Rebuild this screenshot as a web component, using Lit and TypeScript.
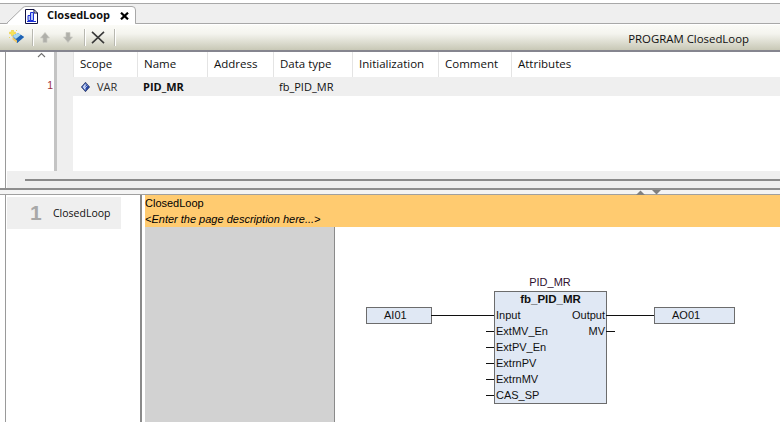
import { LitElement, html, css } from "lit";
import { customElement } from "lit/decorators.js";

const columns = [
  { label: "Scope", w: 64 },
  { label: "Name", w: 70 },
  { label: "Address", w: 66 },
  { label: "Data type", w: 79 },
  { label: "Initialization", w: 86 },
  { label: "Comment", w: 73 },
  { label: "Attributes", w: 269 },
];
const inputs = ["Input", "ExtMV_En", "ExtPV_En", "ExtrnPV", "ExtrnMV", "CAS_SP"];
const outputs = ["Output", "MV"];

const docIcon = html`<svg class="doc" width="13" height="15" viewBox="0 0 13 15">
  <path d="M.5.5H9L12.5 4V14.5H.5Z" fill="#fff" stroke="#101040"/>
  <path d="M9 .5V4H12.5" fill="none" stroke="#101040"/>
  <path d="M5.5 3.5h3v8h-3zM3 6.5h2.5v5H3z" fill="#b8c8f4" stroke="#1c30d8"/>
  <path d="M2 12.5h9" stroke="#1c30d8"/>
</svg>`;
const newIcon = html`<svg width="16" height="15" viewBox="0 0 16 15">
  <path d="M2.5 0h2v2h2v2h-2v2h-2V4H.5V2h2z" fill="#f6e458" stroke="#e8c840" stroke-width=".5"/>
  <path d="M7 0h1v1H7zM0 7h1v1H0z" fill="#e8d860"/>
  <path d="M3.5 6L9 3l6 4-7 6z" fill="#2f78c8"/>
  <path d="M3.5 6L9 3l3 2-5 4z" fill="#a8d8f0"/>
  <path d="M7 9l5-4 3 2-7 6z" fill="#1e62b4"/>
  <path d="M3.5 7l4.5 3.5V13L3.5 9.500z" fill="#f0c868"/>
</svg>`;
const arrow = (down: boolean) => html`<svg class="arrow" width="10" height="11" viewBox="0 0 10 11">
  <path d=${down ? "M3 .5h4v4.500H9.500L5 10.500.5 5H3z" : "M3 10.500h4V6H9.500L5 .5.5 6H3z"} fill="#b0b0aa" stroke="#c8c8c2" stroke-width=".7"/>
</svg>`;
const closeToolIcon = html`<svg width="14" height="13" viewBox="0 0 14 13">
  <path d="M1 .8l12 11.400M13 .8L1 12.200" stroke="#3a3a3a" stroke-width="1.6" fill="none"/>
</svg>`;
const tabClose = html`<svg width="9" height="8" viewBox="0 0 9 8">
  <path d="M1 .7l7 6.600M8 .7L1 7.300" stroke="#000" stroke-width="2.200" fill="none"/>
</svg>`;
const varIcon = html`<svg width="9" height="10" viewBox="0 0 9 10">
  <path d="M4.500 .3L8.700 5 4.500 9.700.3 5z" fill="#2848a8" stroke="#202848" stroke-width=".6"/>
  <path d="M4.500 1.200L1.500 5l3 3.600z" fill="#b8c8f0"/>
  <path d="M2.500 5l3-2.800M3 7l3.500-3.500" stroke="#e8f0ff" stroke-width=".7"/>
</svg>`;

@customElement("app-root")
export class AppRoot extends LitElement {
  static styles = css`
    :host { display: block; width: 780px; height: 422px; overflow: hidden; background: #fff;
      font-family: "Open Sans", sans-serif; font-size: 11px; color: #101010; }
    .frame { height: 422px; display: flex; flex-direction: column; box-sizing: border-box; }

    .tabstrip { height: 21px; margin-top: 3px; box-sizing: border-box; background: #efefef;
      border-top: 1px solid #a8a8a8; border-bottom: 1px solid #a8a8a8; position: relative; flex: none; }
    .tab { position: absolute; left: 6px; top: 1px; width: 130px; height: 19px; }
    .tab > svg.shape { position: absolute; left: 0; top: 0; }
    .tabbody { position: absolute; left: 19px; top: 1px; display: flex; align-items: center; height: 17px; }
    .tabbody .doc { margin-top: 3px; flex: none; }
    .tabname { font-weight: 700; font-size: 11px; margin-left: 9px; width: 73px; flex: none; }
    .tabbody svg:last-child { margin-top: 2px; flex: none; }

    .toolbar { height: 27px; margin-top: 1px; flex: none; box-sizing: border-box; display: flex; align-items: center;
      background: linear-gradient(#fbfbf7, #f4f4ee 35%, #c8c8b6);
      border-bottom: 2px solid #85858f; padding-left: 9px; }
    .sep { width: 1px; height: 17px; background: #b8b8b0; box-shadow: 1px 0 0 #fff; flex: none; }
    .tools-a { width: 23px; display: flex; }
    .tools-b { width: 51px; display: flex; gap: 13px; padding-left: 7px; box-sizing: border-box; }
    .tools-c { width: 29px; display: flex; padding-left: 6px; box-sizing: border-box; }
    .title { margin-left: auto; padding: 1px 31px 0 0; font-size: 11.4px; }

    .decl { height: 136px; flex: none; margin-left: 5px; box-sizing: border-box; border-left: 1px solid #9a9a9a;
      display: flex; flex-direction: column; }
    .decl-main { height: 119px; flex: none; display: flex; }
    .numbers { width: 48px; position: relative; flex: none; border-right: 3px solid #c4c4c4; }
    .sort { position: absolute; left: 31px; top: 0; }
    .line { position: absolute; right: 1px; top: 27px; color: #a03040; font-family: "Liberation Sans", sans-serif; font-size: 10.5px; }
    .numstrip { width: 16px; flex: none; background: #efefef; }
    .table { flex: 1; display: flex; flex-direction: column; }
    .head { height: 25px; display: flex; flex: none; }
    .head div { box-sizing: border-box; border-left: 1px solid #e4e4e4; padding: 4px 0 0 6px; flex: none; font-size: 11.5px; }
    .row { height: 19px; background: #efefef; display: flex; align-items: center; flex: none; }
    .row div { flex: none; box-sizing: border-box; padding-left: 6px; }
    .row .scopecell { display: flex; align-items: center; gap: 7px; color: #303030; padding-left: 8px; }
    .scrollband { height: 17px; margin-left: 1px; background: #efefef; display: flex; align-items: center; padding-left: 18px; flex: none; }
    .scrollband i { flex: 1; height: 2px; background: #8a8a8a; display: block; }

    .splitter { height: 7px; flex: none; box-sizing: border-box; border-top: 2px solid #8e8e8e; border-bottom: 1px solid #a0a0a0;
      background: #f4f4f4; position: relative; }
    .splitter svg { position: absolute; top: 0; left: 636px; }

    .lower { flex: 1; display: flex; margin-left: 5px; border-left: 1px solid #9a9a9a; min-height: 0; }
    .pages { width: 136px; flex: none; box-sizing: border-box; border-right: 2px solid #8a8a8a; padding: 2px 0 0 1px; }
    .pageitem { width: 114px; height: 32px; background: #efefef; display: flex; align-items: center; box-sizing: border-box; padding-left: 23px; }
    .pageitem b { font-size: 21px; color: #a8a8a8; font-family: "Liberation Sans", sans-serif; width: 23px; }
    .pageitem span { font-size: 10.5px; }
    .editor { flex: 1; min-width: 0; margin-left: 3px; display: flex; flex-direction: column; }
    .pagehead { height: 32px; flex: none; background: #ffcb70; font-family: "Liberation Sans", sans-serif; font-size: 11px; color: #000; line-height: 16px; }
    .pagehead em { display: block; font-style: italic; }
    .canvas { flex: 1; position: relative; background: #fff; font-family: "Liberation Sans", sans-serif; font-size: 11px; color: #101010; }
    .margin { position: absolute; left: 0; top: 0; bottom: 0; width: 189px; background: #d2d2d2; border-right: 1px solid #8a8a8a; }
    .label { position: absolute; box-sizing: border-box; background: #e0e8f4; border: 1px solid #6c6c6c; height: 17px; line-height: 15px; padding-left: 17px; }
    .wire { position: absolute; height: 1px; background: #101010; }
    .fbname { position: absolute; left: 349px; width: 112px; top: 48px; text-align: center; line-height: 14px; color: #301030; }
    .block { position: absolute; left: 349px; top: 64px; width: 113px; height: 113px; box-sizing: border-box; background: #e0e8f4; border: 1px solid #6c6c6c; }
    .block h4 { margin: 0; font-size: 11.5px; font-weight: 700; text-align: center; line-height: 15px; }
    .pins { display: flex; justify-content: space-between; padding: 0 1px; }
    .pins > div { display: flex; flex-direction: column; }
    .pins span { height: 16px; line-height: 16px; }
    .pins .out { text-align: right; }
  `;

  render() {
    const W = columns.map((c) => c.w);
    return html`<div class="frame">
      <div class="tabstrip">
        <div class="tab">
          <svg class="shape" width="130" height="19" viewBox="0 0 130 19">
            <path d="M.5 18.500L17 2.500Q18 1.500 20 1.500H126Q129.500 1.500 129.500 5V18.500" fill="#fff" stroke="#a8a8a8"/>
            <path d="M2 18.500H129" stroke="#fff"/>
          </svg>
          <div class="tabbody">${docIcon}<span class="tabname">ClosedLoop</span>${tabClose}</div>
        </div>
      </div>
      <div class="toolbar">
        <div class="tools-a">${newIcon}</div>
        <div class="sep"></div>
        <div class="tools-b">${arrow(false)}${arrow(true)}</div>
        <div class="sep"></div>
        <div class="tools-c">${closeToolIcon}</div>
        <div class="sep"></div>
        <div class="title">PROGRAM ClosedLoop</div>
      </div>
      <div class="decl">
        <div class="decl-main">
          <div class="numbers">
            <svg class="sort" width="9" height="6" viewBox="0 0 9 6"><path d="M1 5L4.500 1.500 8 5" fill="none" stroke="#707070" stroke-width="1.100"/></svg>
            <span class="line">1</span>
          </div>
          <div class="numstrip"></div>
          <div class="table">
            <div class="head">
              ${columns.map((c) => html`<div style="width:${c.w}px">${c.label}</div>`)}
            </div>
            <div class="row">
              <div class="scopecell" style="width:${W[0]}px">${varIcon}<span>VAR</span></div>
              <div style="width:${W[1]}px"><b>PID_MR</b></div>
              <div style="width:${W[2]}px"></div>
              <div style="width:${W[3]}px">fb_PID_MR</div>
            </div>
          </div>
        </div>
        <div class="scrollband"><i></i></div>
      </div>
      <div class="splitter">
        <svg width="32" height="5" viewBox="0 0 32 5">
          <path d="M0 5L4.500 .5 9 5z" fill="#808080"/><path d="M16 0h9l-4.500 4.500z" fill="#808080"/>
        </svg>
      </div>
      <div class="lower">
        <div class="pages">
          <div class="pageitem"><b>1</b><span>ClosedLoop</span></div>
        </div>
        <div class="editor">
          <div class="pagehead">ClosedLoop<em>&lt;Enter the page description here...&gt;</em></div>
          <div class="canvas">
            <div class="margin"></div>
            <div class="label" style="left:221px;top:80px;width:66px">AI01</div>
            <div class="wire" style="left:286px;top:88px;width:64px"></div>
            <div class="fbname">PID_MR</div>
            <div class="block">
              <h4>fb_PID_MR</h4>
              <div class="pins">
                <div>${inputs.map((p) => html`<span>${p}</span>`)}</div>
                <div class="out">${outputs.map((p) => html`<span>${p}</span>`)}</div>
              </div>
            </div>
            ${[104, 120, 136, 152, 168].map(
              (t) => html`<div class="wire" style="left:341px;top:${t}px;width:8px"></div>`
            )}
            <div class="wire" style="left:461px;top:88px;width:49px"></div>
            <div class="wire" style="left:461px;top:104px;width:9px"></div>
            <div class="label" style="left:509px;top:80px;width:81px">AO01</div>
          </div>
        </div>
      </div>
    </div>`;
  }
}
